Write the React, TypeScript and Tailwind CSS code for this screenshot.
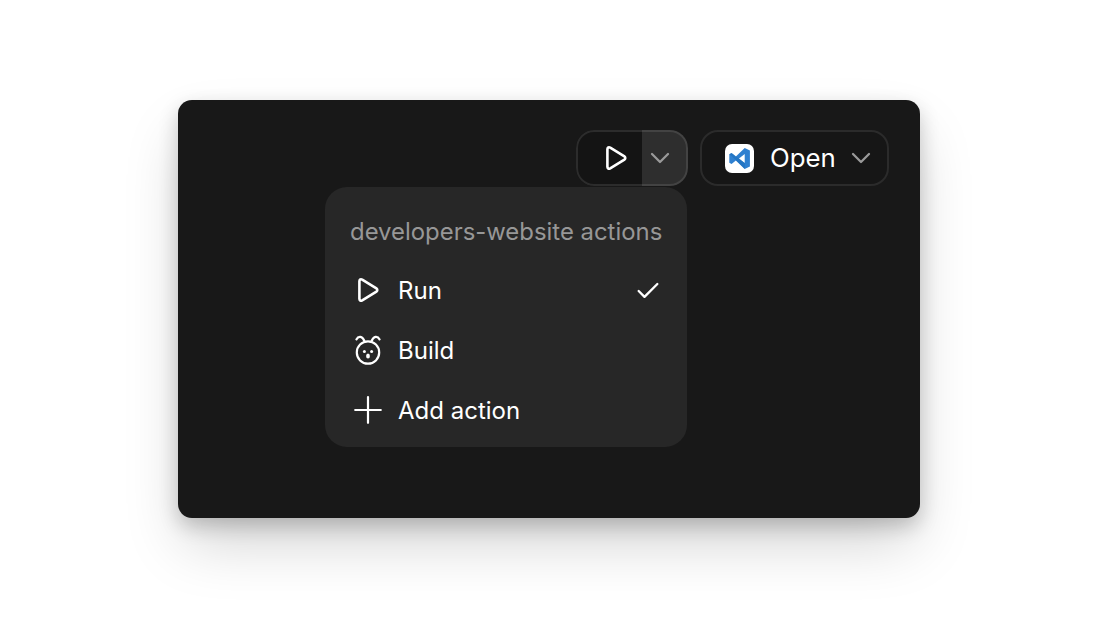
import { Check, ChevronDown } from "lucide-react";

function PlayIcon({ className }: { className?: string }) {
  return (
    <svg viewBox="0 0 22 26" fill="none" stroke="currentColor" strokeWidth="2.6" strokeLinejoin="round" className={className}>
      <path d="M2.4 4.2 C2.4 2.6 3.8 1.8 5.2 2.6 L19.4 11.4 C20.6 12.2 20.6 13.8 19.4 14.6 L5.2 23.4 C3.8 24.2 2.4 23.4 2.4 21.8 Z" />
    </svg>
  );
}

function BuildIcon() {
  return (
    <svg viewBox="0 0 28 30" fill="none" stroke="currentColor" strokeWidth="2.2" strokeLinecap="round" className="h-[30px] w-[28px]">
      <circle cx="14" cy="17.5" r="11.2" />
      <path d="M2.4 4.4 C4.4 0.6 8.4 0.8 10.4 6" />
      <path d="M25.6 4.4 C23.6 0.6 19.6 0.8 17.6 6" />
      <circle cx="10.4" cy="16.6" r="1.5" fill="currentColor" stroke="none" />
      <circle cx="17.6" cy="16.6" r="1.5" fill="currentColor" stroke="none" />
      <ellipse cx="14" cy="21" rx="1.9" ry="2.6" fill="currentColor" stroke="none" />
    </svg>
  );
}

function PlusIcon() {
  return (
    <svg viewBox="0 0 28 28" fill="none" stroke="currentColor" strokeWidth="2.2" strokeLinecap="round" className="h-[28px] w-[28px]">
      <path d="M1.2 14 H26.8 M14 1.2 V26.8" />
    </svg>
  );
}

function VSCodeIcon() {
  return (
    <div className="flex h-[29px] w-[29px] items-center justify-center rounded-[7px] bg-white">
      <svg viewBox="0 0 24 24" className="h-[25px] w-[25px]">
        <path fill="#2f80d0" d="M17 2 L22 4.4 V19.6 L17 22 L8.5 14 L4.4 17.2 L2.2 16 V8 L4.4 6.8 L8.5 10 Z M17 7.6 L11.5 12 L17 16.4 Z" />
        <path fill="#1a6cb8" d="M2.2 8 L4.4 6.8 L17 16.4 V22 L4.4 9.6 Z" opacity="0.55" />
      </svg>
    </div>
  );
}

const actions = [
  { label: "Run", icon: <PlayIcon className="h-[26px] w-[22px]" />, checked: true },
  { label: "Build", icon: <BuildIcon />, checked: false },
  { label: "Add action", icon: <PlusIcon />, checked: false },
];

export default function App() {
  return (
    <div className="h-[618px] overflow-hidden bg-white pl-[178px] pt-[100px] font-['Inter',sans-serif]">
      <div className="relative h-[418px] w-[742px] rounded-[14px] bg-[#181818] pr-[31px] pt-[30px] shadow-[0_30px_60px_-6px_rgba(0,0,0,0.18),0_8px_20px_rgba(0,0,0,0.2)]">
        <div className="flex justify-end gap-[12px]">
          <div className="relative flex h-[56px] w-[112px] overflow-hidden rounded-[18px]">
            <div className="flex flex-1 items-center justify-center bg-[#141414] pl-[13px] text-white">
              <PlayIcon className="h-[26px] w-[22px]" />
            </div>
            <div className="flex w-[46px] items-center justify-center bg-[#2e2e2e] pr-[10px] text-[#9a9a9a]">
              <ChevronDown className="h-[32px] w-[32px] shrink-0" strokeWidth={1.7} />
            </div>
            <div className="absolute inset-0 rounded-[18px] border-2 border-white/10" />
          </div>
          <div className="flex h-[56px] w-[189px] items-center rounded-[18px] border-2 border-[#2b2b2b] bg-[#161616] pl-[23px] text-white">
            <VSCodeIcon />
            <span className="ml-[16px] text-[25.8px] font-normal">Open</span>
            <ChevronDown className="ml-[9px] h-[32px] w-[32px] text-[#9a9a9a]" strokeWidth={1.7} />
          </div>
        </div>
        <div className="absolute left-[147px] top-[87px] h-[260px] w-[362px] rounded-[22px] bg-[#272727] px-[25px] pt-[30px]">
          <p className="whitespace-nowrap text-[23.9px] leading-[30px] text-[#979797]">developers-website actions</p>
          <ul className="mt-[14px]">
            {actions.map((action) => (
              <li key={action.label} className="flex h-[60px] items-center text-white">
                <span className="flex w-[36px] -translate-y-[1px] items-center justify-center">{action.icon}</span>
                <span className="ml-[12px] flex-1 text-[24px] font-normal">{action.label}</span>
                {action.checked && <Check className="h-[28px] w-[28px]" strokeWidth={2} />}
              </li>
            ))}
          </ul>
        </div>
      </div>
    </div>
  );
}
